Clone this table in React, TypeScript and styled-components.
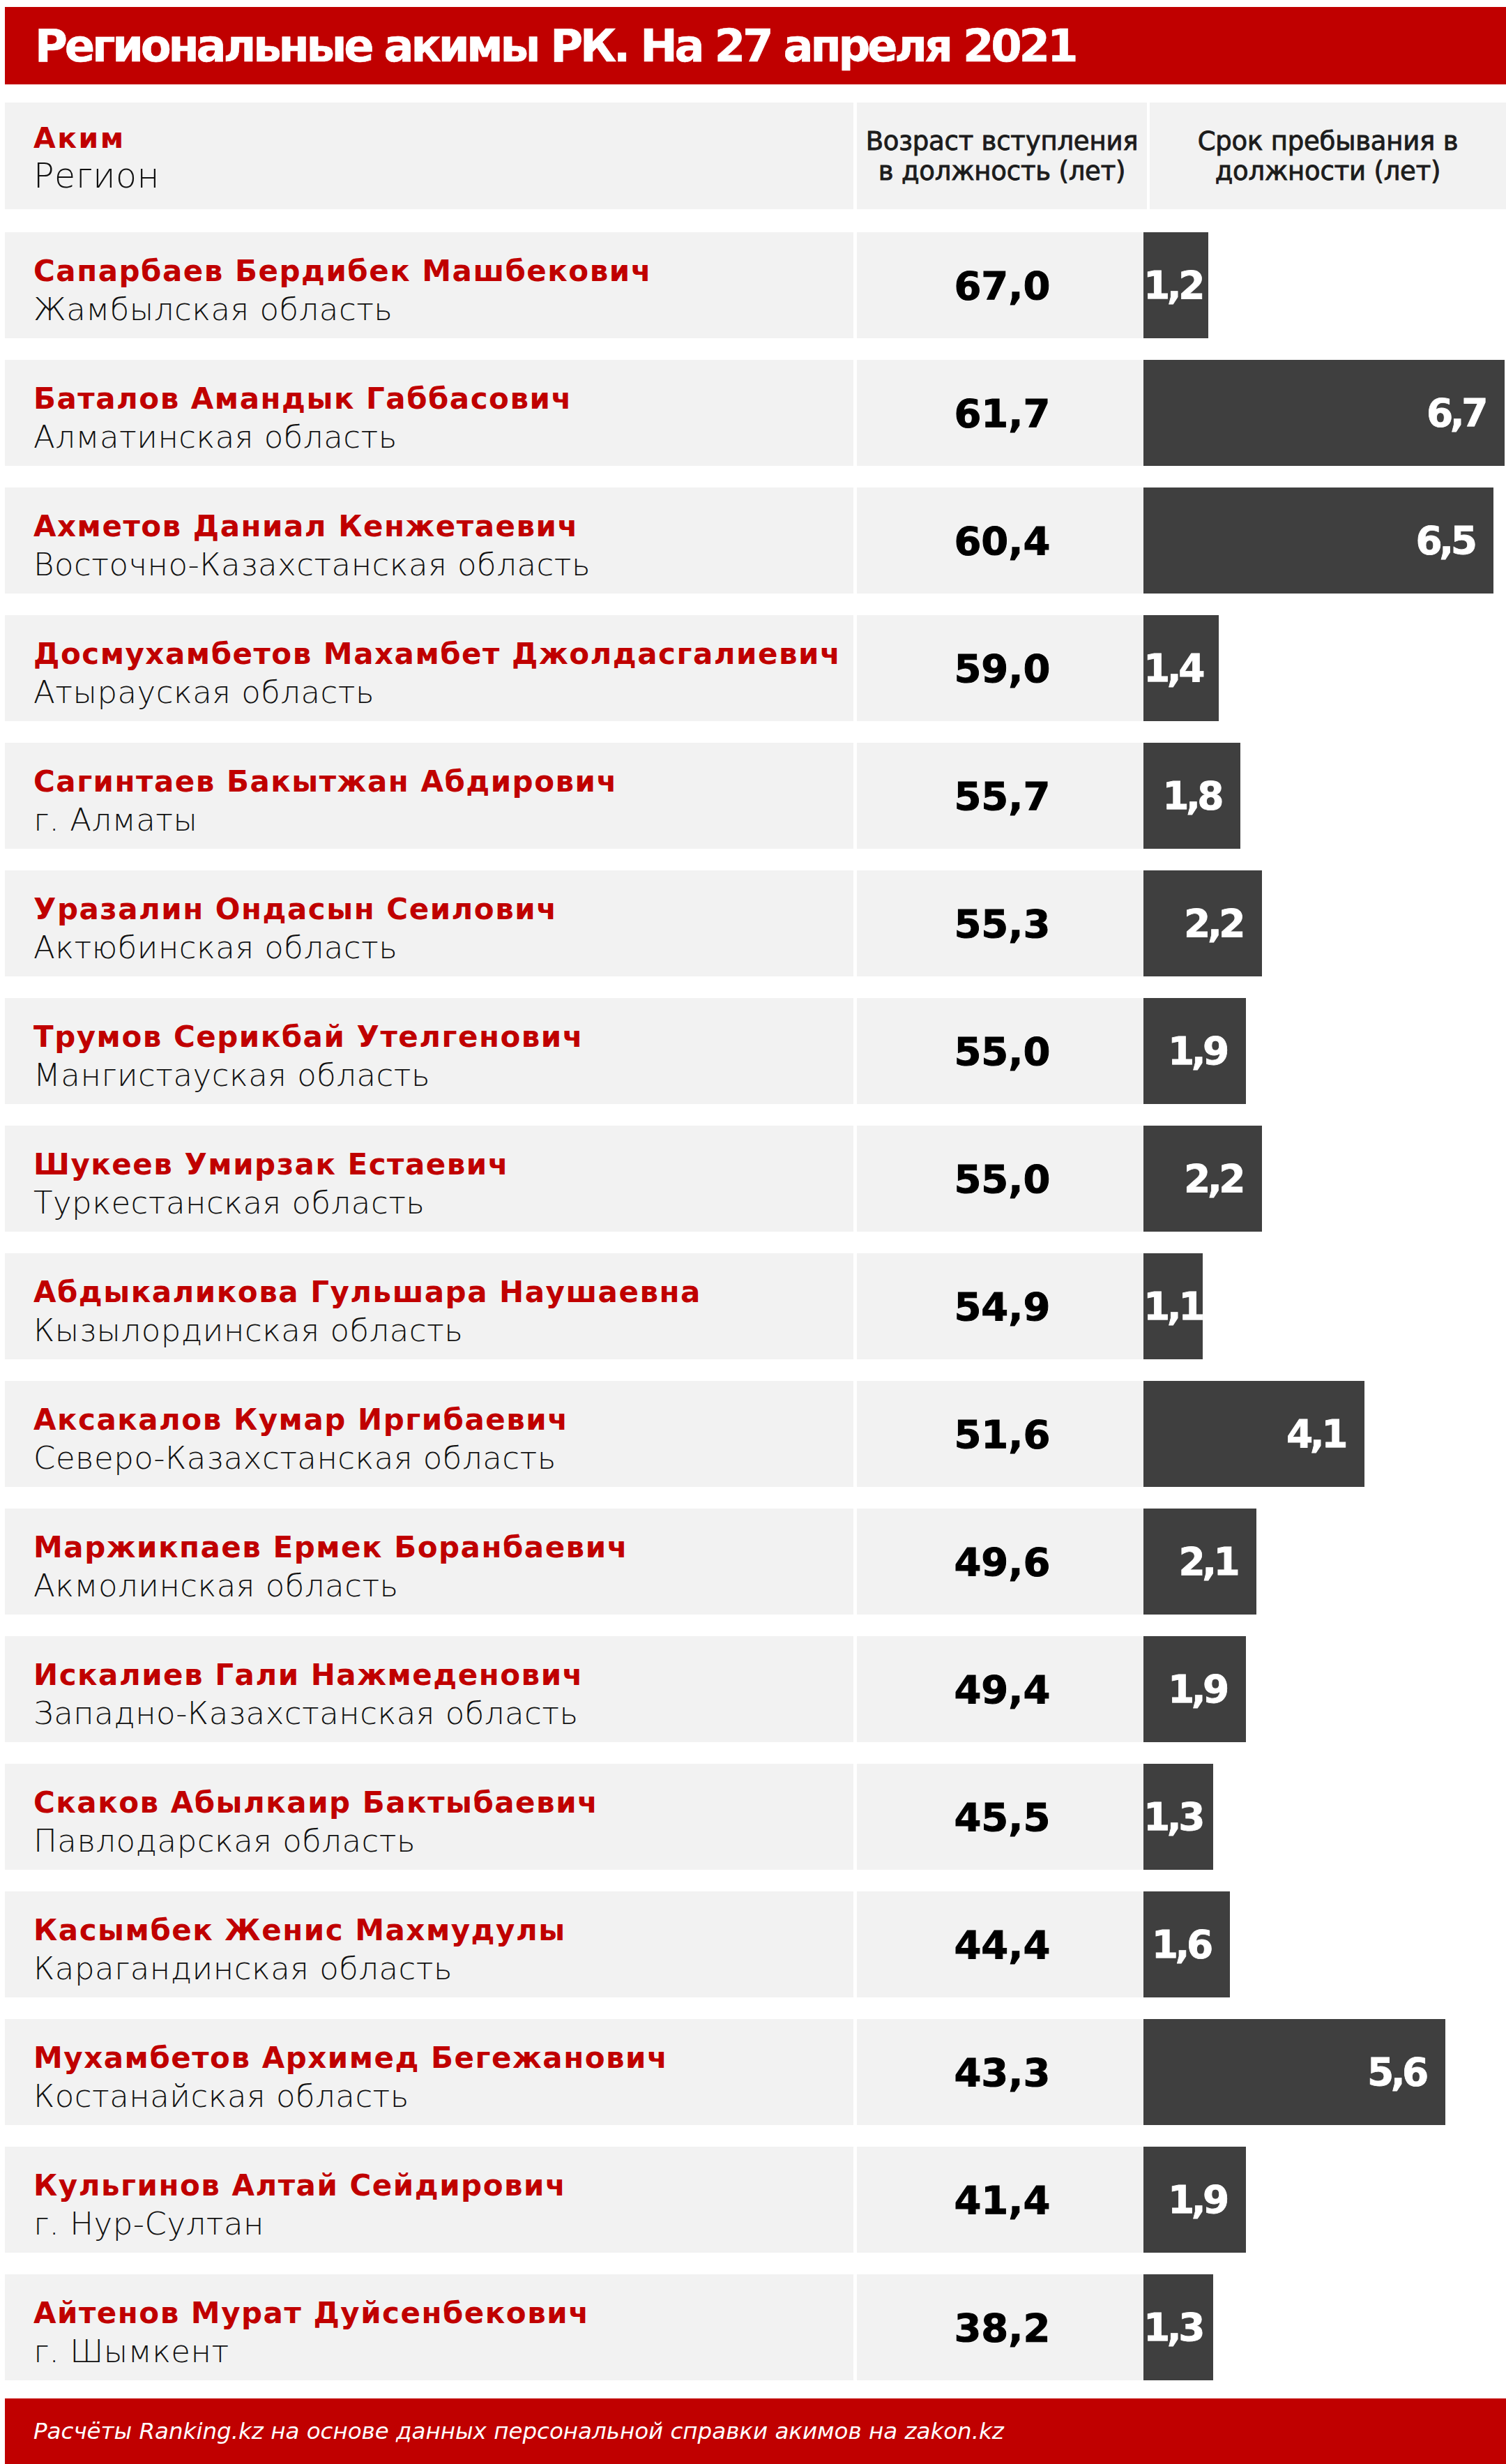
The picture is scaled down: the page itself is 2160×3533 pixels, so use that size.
import React from "react";
import styled, { createGlobalStyle } from "styled-components";

const GlobalStyle = createGlobalStyle`
  html, body { margin: 0; padding: 0; background: #ffffff; }
  body { font-family: "DejaVu Sans", "Liberation Sans", sans-serif; }
`;

const RED = "#c00000";
const ROW_BG = "#f2f2f2";
const BAR_BG = "#3f3f3f";
const UNIT = 77.3;

type Akim = { name: string; region: string; age: string; term: number };

const data: Akim[] = [
  { name: "Сапарбаев Бердибек Машбекович", region: "Жамбылская область", age: "67,0", term: 1.2 },
  { name: "Баталов Амандык Габбасович", region: "Алматинская область", age: "61,7", term: 6.7 },
  { name: "Ахметов Даниал Кенжетаевич", region: "Восточно-Казахстанская область", age: "60,4", term: 6.5 },
  { name: "Досмухамбетов Махамбет Джолдасгалиевич", region: "Атырауская область", age: "59,0", term: 1.4 },
  { name: "Сагинтаев Бакытжан Абдирович", region: "г. Алматы", age: "55,7", term: 1.8 },
  { name: "Уразалин Ондасын Сеилович", region: "Актюбинская область", age: "55,3", term: 2.2 },
  { name: "Трумов Серикбай Утелгенович", region: "Мангистауская область", age: "55,0", term: 1.9 },
  { name: "Шукеев Умирзак Естаевич", region: "Туркестанская область", age: "55,0", term: 2.2 },
  { name: "Абдыкаликова Гульшара Наушаевна", region: "Кызылординская область", age: "54,9", term: 1.1 },
  { name: "Аксакалов Кумар Иргибаевич", region: "Северо-Казахстанская область", age: "51,6", term: 4.1 },
  { name: "Маржикпаев Ермек Боранбаевич", region: "Акмолинская область", age: "49,6", term: 2.1 },
  { name: "Искалиев Гали Нажмеденович", region: "Западно-Казахстанская область", age: "49,4", term: 1.9 },
  { name: "Скаков Абылкаир Бактыбаевич", region: "Павлодарская область", age: "45,5", term: 1.3 },
  { name: "Касымбек Женис Махмудулы", region: "Карагандинская область", age: "44,4", term: 1.6 },
  { name: "Мухамбетов Архимед Бегежанович", region: "Костанайская область", age: "43,3", term: 5.6 },
  { name: "Кульгинов Алтай Сейдирович", region: "г. Нур-Султан", age: "41,4", term: 1.9 },
  { name: "Айтенов Мурат Дуйсенбекович", region: "г. Шымкент", age: "38,2", term: 1.3 },
];

const Page = styled.div`
  width: 2160px;
  box-sizing: border-box;
  padding: 10px 0 0 7px;
  display: flex;
  flex-direction: column;
`;

const TitleBar = styled.header`
  height: 111px;
  background: ${RED};
  display: flex;
  align-items: center;
  padding-left: 43px;
`;

const Title = styled.h1`
  margin: 0;
  color: #ffffff;
  font-family: "DejaVu Sans", sans-serif;
  font-weight: 700;
  font-size: 64px;
  letter-spacing: -4.2px;
  white-space: nowrap;
  -webkit-text-stroke: 0.6px #ffffff;
`;

const Table = styled.div`
  display: flex;
  flex-direction: column;
  gap: 31px;
  margin-top: 26px;
`;

const HeaderRow = styled.div`
  display: flex;
  height: 153px;
  margin-bottom: 2px;
`;

const Row = styled.div`
  display: flex;
  height: 152px;
`;

const NameCell = styled.div<{ $head?: boolean }>`
  width: 1217px;
  flex: none;
  box-sizing: border-box;
  background: ${ROW_BG};
  padding: ${(p) => (p.$head ? "25px" : "30px")} 0 0 41px;
  display: flex;
  flex-direction: column;
`;

const Name = styled.div<{ $head?: boolean }>`
  color: ${RED};
  font-weight: 700;
  font-size: ${(p) => (p.$head ? "41px" : "42px")};
  line-height: 52px;
  letter-spacing: ${(p) => (p.$head ? "2.5px" : "1.5px")};
  white-space: nowrap;
`;

const Region = styled.div<{ $head?: boolean }>`
  color: #111111;
  font-weight: 200;
  font-size: ${(p) => (p.$head ? "49px" : "45px")};
  line-height: 58px;
  letter-spacing: 0.5px;
  white-space: nowrap;
`;

const HeadCell = styled.div<{ $width?: number }>`
  ${(p) => (p.$width ? `width: ${p.$width}px; flex: none;` : "flex: 1;")}
  margin-left: 5px;
  background: ${ROW_BG};
  display: flex;
  flex-direction: column;
  align-items: center;
  justify-content: center;
  text-align: center;
  color: #1c1c1c;
  font-size: 37px;
  line-height: 43px;
  letter-spacing: -0.2px;
  -webkit-text-stroke: 0.9px #1c1c1c;
  &:last-child {
    margin-left: 4px;
  }
`;

const ValueCell = styled.div`
  width: 411px;
  flex: none;
  margin-left: 5px;
  padding-left: 6px;
  box-sizing: border-box;
  background: ${ROW_BG};
  display: flex;
  align-items: center;
  justify-content: center;
  color: #000000;
  font-weight: 700;
  font-size: 56px;
  letter-spacing: 0;
  -webkit-text-stroke: 1px #000000;
`;

const BarTrack = styled.div`
  flex: 1;
  display: flex;
`;

const Bar = styled.div`
  height: 100%;
  box-sizing: border-box;
  background: ${BAR_BG};
  display: flex;
  align-items: center;
  padding: 0 28px 0 0;
`;

const BarValue = styled.span`
  margin-left: auto;
  color: #ffffff;
  font-weight: 700;
  font-size: 55px;
  letter-spacing: -4.5px;
  white-space: nowrap;
  -webkit-text-stroke: 0.8px #ffffff;
`;

const Footer = styled.footer`
  margin-top: 26px;
  height: 94px;
  background: ${RED};
  display: flex;
  align-items: center;
  padding-left: 41px;
  color: #ffffff;
  font-size: 32.5px;
  font-weight: 200;
  font-style: italic;
  white-space: nowrap;
`;

export default function App() {
  return (
    <>
      <GlobalStyle />
      <Page>
        <TitleBar>
          <Title>Региональные акимы РК. На 27 апреля 2021</Title>
        </TitleBar>
        <Table>
          <HeaderRow>
            <NameCell $head>
              <Name $head>Аким</Name>
              <Region $head>Регион</Region>
            </NameCell>
            <HeadCell $width={416}>
              <span>Возраст вступления</span>
              <span>в должность (лет)</span>
            </HeadCell>
            <HeadCell>
              <span>Срок пребывания в</span>
              <span>должности (лет)</span>
            </HeadCell>
          </HeaderRow>
          {data.map((d) => (
            <Row key={d.name}>
              <NameCell>
                <Name>{d.name}</Name>
                <Region>{d.region}</Region>
              </NameCell>
              <ValueCell>{d.age}</ValueCell>
              <BarTrack>
                <Bar style={{ width: `${d.term * UNIT}px` }}>
                  <BarValue>{d.term.toFixed(1).replace(".", ",")}</BarValue>
                </Bar>
              </BarTrack>
            </Row>
          ))}
        </Table>
        <Footer>
          Расчёты Ranking.kz на основе данных персональной справки акимов на zakon.kz
        </Footer>
      </Page>
    </>
  );
}
